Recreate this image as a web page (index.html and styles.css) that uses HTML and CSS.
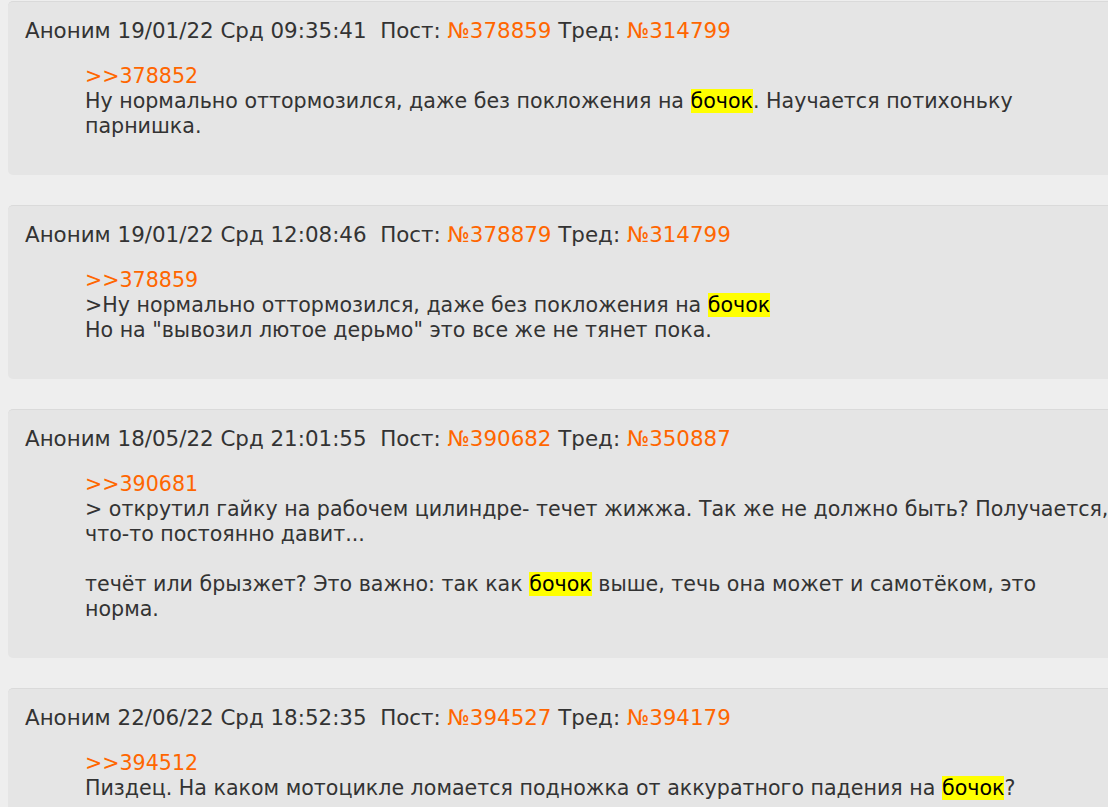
FILE: index.html
```html
<!DOCTYPE html>
<html lang="ru">
<head>
	<meta charset="UTF-8">
	<title>Поиск: бочок</title>
	<link rel="stylesheet" href="styles.css">
</head>
<body>
	<div class="thread">
		<div class="post">
			<div class="post-head">Аноним 19/01/22 Срд 09:35:41&nbsp; Пост: <a href="#">№378859</a> Тред: <a href="#">№314799</a></div>
			<blockquote class="post-msg">
				<a href="#">&gt;&gt;378852</a><br>
				Ну нормально оттормозился, даже без покложения на <mark>бочок</mark>. Научается потихоньку парнишка.
			</blockquote>
		</div>

		<div class="post">
			<div class="post-head">Аноним 19/01/22 Срд 12:08:46&nbsp; Пост: <a href="#">№378879</a> Тред: <a href="#">№314799</a></div>
			<blockquote class="post-msg">
				<a href="#">&gt;&gt;378859</a><br>
				&gt;Ну нормально оттормозился, даже без покложения на <mark>бочок</mark><br>
				Но на "вывозил лютое дерьмо" это все же не тянет пока.
			</blockquote>
		</div>

		<div class="post">
			<div class="post-head">Аноним 18/05/22 Срд 21:01:55&nbsp; Пост: <a href="#">№390682</a> Тред: <a href="#">№350887</a></div>
			<blockquote class="post-msg">
				<a href="#">&gt;&gt;390681</a><br>
				&gt; открутил гайку на рабочем цилиндре- течет жижжа. Так же не должно быть? Получается, что-то постоянно давит...<br>
				<br>
				течёт или брызжет? Это важно: так как <mark>бочок</mark> выше, течь она может и самотёком, это норма.
			</blockquote>
		</div>

		<div class="post">
			<div class="post-head">Аноним 22/06/22 Срд 18:52:35&nbsp; Пост: <a href="#">№394527</a> Тред: <a href="#">№394179</a></div>
			<blockquote class="post-msg">
				<a href="#">&gt;&gt;394512</a><br>
				Пиздец. На каком мотоцикле ломается подножка от аккуратного падения на <mark>бочок</mark>?
			</blockquote>
		</div>
	</div>
</body>
</html>
```

FILE: styles.css
```css
html, body {
	overflow: hidden;
}
body {
	margin: 0 0 0 8px;
	background: #eeeeee;
	color: #333333;
	font-family: "DejaVu Sans", Verdana, sans-serif;
	font-size: 20.6px;
	line-height: 25px;
}
.thread {
	width: 1130px;
	padding-top: 1px;
}
.post {
	background: #e5e5e5;
	border-top: 1px solid #dadada;
	border-radius: 5px;
	padding: 16px 0 36px 17px;
	margin-bottom: 30px;
}
.post a {
	color: #ff6600;
	text-decoration: none;
}
.post-head {
	font-size: 21.4px;
}
.post-msg {
	margin: 21px 0 0 60px;
	width: 1028px;
}
.post-msg mark {
	background: #ffff00;
	color: #000000;
}
```
